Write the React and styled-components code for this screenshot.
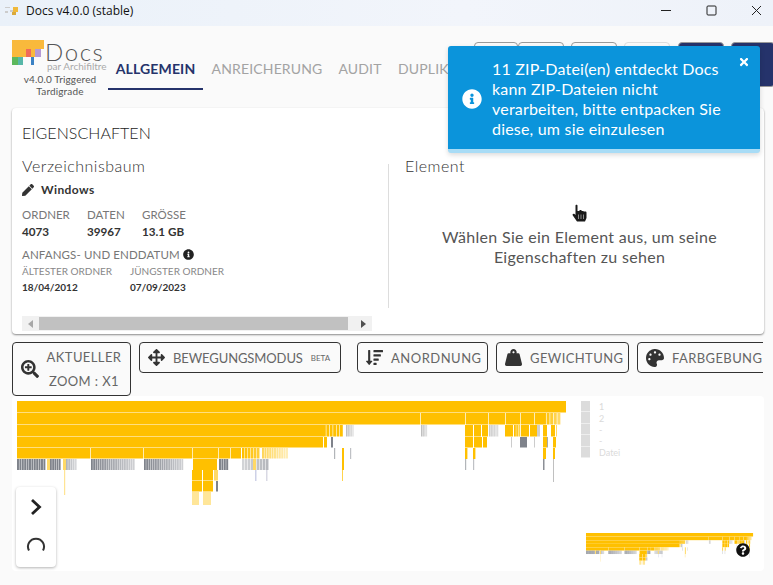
import React from "react";
import styled, { createGlobalStyle } from "styled-components";
import {
  FaArrowsAlt,
  FaInfoCircle,
  FaPalette,
  FaPen,
  FaQuestionCircle,
  FaSearchPlus,
  FaSortAmountDown,
  FaTimes,
  FaWeightHanging,
} from "react-icons/fa";

const NAVY = "#25336b";
const GOLD = "#ffc000";
const FONT = `Lato, "Noto Sans", sans-serif`;

const GlobalStyle = createGlobalStyle`
  html, body { margin: 0; padding: 0; background: #fafafa; }
  body { width: 773px; height: 585px; overflow: hidden; font-family: ${FONT}; color: #333; }
  * { box-sizing: border-box; }
`;

const Page = styled.div`
  position: relative;
  width: 773px;
  height: 585px;
  overflow: hidden;
  display: flex;
  flex-direction: column;
`;

const TitleBar = styled.div`
  height: 26px;
  flex: none;
  display: flex;
  align-items: center;
  padding: 0 0 5px 5px;
  background: linear-gradient(90deg, #eaf1f9, #f2f5fb 60%, #eef2f9);
`;

const TitleText = styled.span`
  margin-left: 7px;
  font: 12px "Open Sans", sans-serif;
  color: #111;
`;

const WindowControls = styled.div`
  margin-left: auto;
  margin-right: -6px;
  display: flex;
  align-items: center;
`;

const WindowButton = styled.div`
  width: 45px;
  height: 20px;
  display: flex;
  align-items: center;
  justify-content: center;
`;

const Header = styled.header`
  height: 82px;
  flex: none;
  display: flex;
  padding-left: 12px;
`;

const Brand = styled.div`
  width: 96px;
  flex: none;
  padding-top: 14px;
  display: flex;
  flex-direction: column;
`;

const BrandRow = styled.div`
  display: flex;
  height: 32px;
`;

const BrandName = styled.div`
  margin: 2px 0 0 1px;
  font-size: 24px;
  line-height: 20px;
  font-weight: 300;
  letter-spacing: 1.6px;
  color: #555;
`;

const BrandSub = styled.div`
  margin: 0 0 0 3px;
  font-size: 10px;
  line-height: 8px;
  white-space: nowrap;
  color: #aaa;
`;

const BrandVersion = styled.div`
  width: 96px;
  margin-top: 1px;
  text-align: center;
  font-size: 10px;
  line-height: 12px;
  letter-spacing: 0.15px;
  color: #555;
`;

const Tab = styled.div`
  height: 64px;
  width: ${({ $w }) => $w}px;
  flex: none;
  padding-top: 35px;
  text-align: ${({ $start }) => ($start ? "left" : "center")};
  padding-left: ${({ $start }) => ($start ? 9 : 0)}px;
  white-space: nowrap;
  font-size: 14px;
  letter-spacing: 0.15px;
  line-height: 16px;
  font-weight: ${({ $active }) => ($active ? 700 : 400)};
  color: ${({ $active }) => ($active ? NAVY : "#a3a3a3")};
  border-bottom: 2px solid ${({ $active }) => ($active ? NAVY : "transparent")};
`;

const TopActions = styled.div`
  position: absolute;
  top: 42px;
  left: 474px;
  display: flex;
`;

const TopAction = styled.div`
  width: ${({ $w }) => $w}px;
  height: 45px;
  margin-left: ${({ $gap }) => $gap || 0}px;
  flex: none;
  border-radius: 4px;
  border: 1px solid ${({ $pale }) => ($pale ? "#ddd" : "#999")};
  background: ${({ $filled }) => ($filled ? NAVY : "transparent")};
`;

const Card = styled.section`
  height: 226px;
  flex: none;
  margin: 0 9px 0 12px;
  background: #fff;
  border-radius: 4px;
  box-shadow: 0 1px 2px rgba(0, 0, 0, 0.45);
  padding: 15px 10px 0;
  display: flex;
  flex-direction: column;
`;

const CardTitle = styled.div`
  font-size: 16px;
  line-height: 20px;
  font-weight: 300;
  letter-spacing: 0.05px;
  color: #222;
`;

const Columns = styled.div`
  display: flex;
  margin-top: 13px;
  height: 152px;
`;

const LeftPane = styled.div`
  position: relative;
  width: 367px;
  flex: none;
  &::after {
    content: "";
    position: absolute;
    right: 0;
    top: 8px;
    bottom: 0;
    width: 1px;
    background: #ddd;
  }
`;

const RightPane = styled.div`
  flex: 1;
  padding-left: 16px;
  display: flex;
  flex-direction: column;
`;

const PaneTitle = styled.div`
  font-size: 16px;
  line-height: 20px;
  font-weight: 300;
  letter-spacing: 0.5px;
  color: #333;
`;

const NameRow = styled.div`
  margin-top: 6px;
  display: flex;
  align-items: center;
  gap: 7px;
  font-size: 12px;
  line-height: 16px;
  font-weight: 700;
  letter-spacing: 0.4px;
  color: #333;
`;

const Stats = styled.div`
  display: flex;
  margin-top: ${({ $top }) => $top}px;
`;

const Stat = styled.div`
  width: ${({ $w }) => $w}px;
  flex: none;
`;

const StatLabel = styled.div`
  font-size: 11.5px;
  line-height: 15px;
  color: #777;
  white-space: nowrap;
`;

const StatValue = styled.div`
  margin-top: 1px;
  font-size: 11.7px;
  line-height: 16px;
  font-weight: 700;
  color: #333;
`;

const DateHeading = styled.div`
  margin-top: 8px;
  display: flex;
  align-items: center;
  gap: 3px;
  font-size: 11.5px;
  line-height: 15px;
  letter-spacing: 0.12px;
  color: #777;
`;

const DateLabel = styled.div`
  font-size: 10px;
  line-height: 13px;
  margin-top: 3px;
  color: #888;
  white-space: nowrap;
`;

const DateValue = styled.div`
  margin-top: 2px;
  font-size: 10px;
  line-height: 14px;
  font-weight: 700;
  color: #333;
`;

const Placeholder = styled.div`
  margin-top: 51px;
  text-align: center;
  font-size: 16px;
  line-height: 20px;
  letter-spacing: 0.3px;
  color: #555;
`;

const ScrollTrack = styled.div`
  width: 350px;
  height: 15px;
  margin-top: 8px;
  background: #f1f1f1;
  display: flex;
  align-items: center;
`;

const ScrollThumb = styled.div`
  width: 309px;
  height: 13px;
  margin-right: auto;
  background: #c1c1c1;
`;

const ScrollArrow = styled.div`
  width: 17px;
  display: flex;
  justify-content: center;
  font-size: 0;
  &::before {
    content: "";
    border: 4px solid transparent;
    border-left: 0;
    border-right: 5px solid ${({ $off }) => ($off ? "#a8a8a8" : "#505050")};
    transform: ${({ $flip }) => ($flip ? "scaleX(-1)" : "none")};
  }
`;

const Toolbar = styled.div`
  height: 54px;
  flex: none;
  margin: 8px 10px 0 12px;
  display: flex;
  align-items: flex-start;
  overflow: hidden;
`;

const ToolButton = styled.div`
  height: ${({ $tall }) => ($tall ? 54 : 31)}px;
  width: ${({ $w }) => $w}px;
  margin-right: ${({ $gap }) => $gap}px;
  flex: none;
  display: flex;
  align-items: center;
  gap: ${({ $iconGap }) => $iconGap || 8}px;
  padding-left: ${({ $pad }) => $pad || 8}px;
  border: 1px solid #333;
  border-radius: 4px;
  font-size: 13px;
  letter-spacing: ${({ $track }) => $track ?? 0.4}px;
  color: #666;
  white-space: nowrap;
  svg { flex: none; color: #333; }
`;

const ZoomText = styled.div`
  width: 80px;
  text-align: center;
  line-height: 24px;
`;

const Beta = styled.span`
  font-size: 8px;
  letter-spacing: 0;
  color: #666;
`;

const VizPanel = styled.section`
  position: relative;
  height: 175px;
  flex: none;
  margin: 0 9px 0 12px;
  padding: 5px 0 0 5px;
  background: #fff;
  border-radius: 4px;
  display: flex;
  align-items: flex-start;
`;

const Legend = styled.div`
  margin-left: 12px;
  display: flex;
  flex-direction: column;
`;

const LegendRow = styled.div`
  height: 11.4px;
  display: flex;
  align-items: center;
  font-size: 9px;
  color: #dadada;
  white-space: nowrap;
`;

const LegendSwatch = styled.div`
  width: 9px;
  height: 100%;
  margin-right: 9px;
  background: #dcdcdc;
  border-bottom: 1px solid #eee;
`;

const ChartControls = styled.div`
  position: absolute;
  left: 4px;
  top: 91px;
  width: 40px;
  height: 80px;
  background: #fff;
  border-radius: 4px;
  box-shadow: 0 1px 3px rgba(0, 0, 0, 0.3);
  display: flex;
  flex-direction: column;
  align-items: center;
  padding-top: 11px;
  gap: 20px;
`;

const MiniMap = styled.div`
  position: absolute;
  left: 574px;
  top: 137px;
`;

const HelpIcon = styled.div`
  position: absolute;
  left: 724px;
  top: 147px;
  display: flex;
  color: #111;
`;

const Toast = styled.div`
  position: absolute;
  left: 448px;
  top: 46px;
  width: 312px;
  height: 107px;
  display: flex;
  align-items: center;
  padding: 3px 30px 0 14px;
  gap: 10px;
  background: #0b94db;
  border-bottom: 4px solid #a8dcf6;
  border-radius: 3px;
  color: #fff;
  font-size: 16px;
  line-height: 20px;
  letter-spacing: 0.2px;
  box-shadow: 0 2px 5px rgba(0, 0, 0, 0.15);
  svg { flex: none; }
`;

const ToastClose = styled.div`
  position: absolute;
  right: 10px;
  top: 10px;
  display: flex;
`;

const Pointer = styled.div`
  position: absolute;
  left: 572px;
  top: 204px;
  display: flex;
`;

// flame chart, in screen px so the same shapes can be scaled down for the minimap
const ROWS = [401, 413, 425, 437, 448, 459, 470, 481, 492];
const HEIGHTS = [11.5, 11.5, 11.5, 10.5, 10.5, 11, 10.5, 10.5, 13];

const bar = (row, x, x2, fill = GOLD, opacity = 1) => ({
  x,
  w: x2 - x,
  y: ROWS[row],
  h: HEIGHTS[row],
  fill,
  opacity,
});

const stripes = (row, x, x2, step, fill, from = 1, to = 1) => {
  const out = [];
  const n = Math.floor((x2 - x) / step);
  for (let i = 0; i < n; i++) {
    const at = x + i * step;
    out.push({
      x: at,
      w: step * 0.82,
      y: ROWS[row],
      h: HEIGHTS[row],
      fill,
      opacity: from + (to - from) * (i / n),
    });
  }
  return out;
};

const drop = (x, y, y2, fill, w = 1.2, opacity = 0.7) => ({
  x,
  w,
  y,
  h: y2 - y,
  fill,
  opacity,
});

const GREY = "#7f838b";
const PALE = "#ffd966";

const FLAME = [
  bar(0, 17, 566),
  bar(1, 17, 420),
  bar(1, 420.7, 465),
  bar(1, 465.7, 488),
  bar(1, 488.7, 505),
  bar(1, 505.7, 520),
  bar(1, 520.7, 534),
  bar(1, 534.7, 543),
  ...stripes(1, 543, 562, 3.6, GOLD, 1, 0.5),
  bar(2, 17, 323),
  ...stripes(2, 323, 346, 3.4, GOLD),
  ...stripes(2, 346, 354, 1.6, "#b8b8b8", 0.9, 0.3),
  ...stripes(2, 421, 428, 1.6, "#b8b8b8", 0.9, 0.3),
  bar(2, 465, 473),
  bar(2, 474, 481),
  bar(2, 482, 488),
  ...stripes(2, 489, 499, 1.6, "#c4c4c4", 0.9, 0.5),
  bar(2, 505, 513),
  ...stripes(2, 514, 521, 2.2, GOLD, 1, 0.6),
  bar(2, 521, 529),
  bar(2, 530, 537),
  bar(2, 537, 540, "#cfcfcf"),
  bar(2, 543, 547),
  bar(2, 551, 555),
  bar(2, 556, 557, PALE),
  bar(3, 17, 323),
  bar(3, 324, 327),
  bar(3, 331, 333, GREY),
  bar(3, 465, 473),
  bar(3, 474, 482),
  bar(3, 483, 487),
  bar(3, 511, 512, "#ccc"),
  bar(3, 520, 527, GREY),
  bar(3, 534, 535, "#ccc"),
  bar(3, 543, 547),
  bar(3, 547, 548, GREY, 0.7),
  bar(3, 553, 556),
  bar(4, 17, 90),
  bar(4, 90.7, 143),
  bar(4, 143.7, 192),
  bar(4, 192.7, 218),
  bar(4, 218.7, 230),
  bar(4, 230.7, 241),
  ...stripes(4, 242, 262, 3, GOLD, 1, 0.75),
  ...stripes(4, 262, 290, 2.4, GOLD, 0.65, 0.25),
  ...stripes(5, 17, 47, 2.4, GREY),
  bar(5, 47, 50, PALE),
  ...stripes(5, 50, 63, 2.2, GREY),
  bar(5, 63, 66, PALE),
  ...stripes(5, 66, 79, 2.2, GREY, 0.6, 0.25),
  ...stripes(5, 91, 135, 2.2, GREY, 1, 0.35),
  ...stripes(5, 144, 185, 2.2, GREY, 1, 0.35),
  bar(5, 193, 217),
  ...stripes(5, 219, 229, 2.4, GREY),
  ...stripes(5, 242, 270, 3, GREY, 0.35, 0.6),
  bar(5, 253, 256, PALE),
  bar(6, 192, 202),
  bar(6, 203, 213),
  bar(6, 214, 218, PALE),
  bar(7, 192, 202),
  bar(7, 203, 213),
  bar(7, 216, 218, GREY),
  bar(8, 192, 199, GOLD, 0.4),
  bar(8, 203, 211, GOLD, 0.4),
  drop(64, 470, 495, PALE),
  drop(255, 470, 481, "#b9bedd", 1.5),
  drop(266, 470, 481, "#c9c9d9", 1.5),
  drop(334, 448, 459, GREY, 1.2, 0.6),
  drop(342, 448, 470, GOLD, 2, 1),
  drop(342, 470, 481, GOLD, 1, 0.7),
  drop(350, 448, 459, GREY, 1.2, 0.5),
  drop(465, 448, 459, GOLD, 2.4, 1),
  drop(465, 459, 470, GREY, 1.2, 0.6),
  drop(473, 448, 459, GOLD, 2.4, 1),
  drop(473, 459, 470, GREY, 1.2, 0.5),
  drop(543, 448, 459, GOLD, 3, 1),
  drop(543, 459, 470, GREY, 1.5, 0.9),
  drop(553, 448, 459, GOLD, 2, 1),
  drop(553, 459, 482, "#b0b0b0", 1, 0.8),
];

const FlameChart = ({ width, height }) => (
  <svg width={width} height={height} viewBox="17 401 552 105" preserveAspectRatio="none">
    {FLAME.map((r, i) => (
      <rect key={i} x={r.x} y={r.y} width={r.w} height={r.h} fill={r.fill} opacity={r.opacity} />
    ))}
  </svg>
);

const AppIcon = () => (
  <svg width="14" height="12" viewBox="0 0 14 12">
    <rect x="0" y="2" width="5" height="1" fill="#ccc" />
    <rect x="0" y="6" width="3" height="2" fill="#ccc" />
    <rect x="5" y="5" width="4" height="2" fill="#ccc" />
    <rect x="8" y="2" width="5" height="5" fill="#f0b93a" />
    <rect x="7" y="7" width="4" height="3" fill="#d9a93c" />
  </svg>
);

const Logo = () => (
  <svg width="32" height="26" viewBox="0 0 32 26">
    <rect width="32" height="9" fill="#f9b93c" />
    <rect y="9" width="14" height="8" fill="#f9b93c" />
    <rect x="14" y="9" width="5" height="8" fill="#ef6a5a" />
    <rect x="19" y="9" width="4" height="8" fill="#f9b93c" />
    <rect x="23" y="9" width="6" height="8" fill="#b49ad6" />
    <rect y="17" width="6" height="8" fill="#5cb85c" />
    <rect x="6" y="17" width="5" height="8" fill="#57b7a8" />
    <rect x="19" y="17" width="3" height="8" fill="#3b82c4" />
  </svg>
);

const ChevronIcon = () => (
  <svg width="14" height="18" viewBox="0 0 14 18">
    <path d="M3 2l7.500 7L3 16" fill="none" stroke="#222" strokeWidth="2.8" />
  </svg>
);

const SpinnerIcon = () => (
  <svg width="20" height="18" viewBox="0 0 20 18">
    <path d="M3 14.500A8 8 0 1 1 17 14.500" fill="none" stroke="#333" strokeWidth="2" />
  </svg>
);

const PointerIcon = () => (
  <svg width="15" height="18" viewBox="0 0 15 18">
    <path
      d="M3.500 1.500C3.500.500 5.500.500 5.500 1.500V7h2V6h2v1h2V7.500h2c.7 0 1 .5 1 1.200V14l-1.500 3.500H5L.8 11.500c-.8-1.200.6-2.300 1.700-1.400l1 .9z"
      fill="#1a1a1a"
    />
    <path d="M6.500 10.500v4.500M9 10.500v4.500M11.500 10.500v4.500" stroke="#fff" strokeWidth="0.7" opacity="0.7" />
  </svg>
);

const tabs = [
  ["ALLGEMEIN", 95, true],
  ["ANREICHERUNG", 128],
  ["AUDIT", 58],
  ["DUPLIKATE", 80, false, true],
];

const legend = ["1", "2", "-", "-", "Datei"];

const App = () => (
  <Page>
    <GlobalStyle />
    <TitleBar>
      <AppIcon />
      <TitleText>Docs v4.0.0 (stable)</TitleText>
      <WindowControls>
        <WindowButton>
          <svg width="11" height="11" viewBox="0 0 11 11">
            <path d="M0 5.500h10" stroke="#222" />
          </svg>
        </WindowButton>
        <WindowButton>
          <svg width="11" height="11" viewBox="0 0 11 11">
            <rect x="1" y="1" width="9" height="9" rx="1" fill="none" stroke="#222" />
          </svg>
        </WindowButton>
        <WindowButton>
          <svg width="11" height="11" viewBox="0 0 11 11">
            <path d="M1 1l9 9M10 1l-9 9" stroke="#222" />
          </svg>
        </WindowButton>
      </WindowControls>
    </TitleBar>

    <Header>
      <Brand>
        <BrandRow>
          <Logo />
          <div>
            <BrandName>Docs</BrandName>
            <BrandSub>par Archifiltre</BrandSub>
          </div>
        </BrandRow>
        <BrandVersion>
          v4.0.0 Triggered
          <br />
          Tardigrade
        </BrandVersion>
      </Brand>
      {tabs.map(([label, w, active, start]) => (
        <Tab key={label} $w={w} $active={active} $start={start}>
          {label}
        </Tab>
      ))}
    </Header>

    <TopActions>
      <TopAction $w={44} />
      <TopAction $w={46} />
      <TopAction $w={46} $gap={7} />
      <TopAction $w={46} $gap={7} $pale />
      <TopAction $w={46} $gap={8} $filled />
      <TopAction $w={44} $gap={7} $filled />
    </TopActions>

    <Card>
      <CardTitle>EIGENSCHAFTEN</CardTitle>
      <Columns>
        <LeftPane>
          <PaneTitle>Verzeichnisbaum</PaneTitle>
          <NameRow>
            <FaPen size={12} />
            Windows
          </NameRow>
          <Stats $top={9}>
            <Stat $w={65}>
              <StatLabel>ORDNER</StatLabel>
              <StatValue>4073</StatValue>
            </Stat>
            <Stat $w={55}>
              <StatLabel>DATEN</StatLabel>
              <StatValue>39967</StatValue>
            </Stat>
            <Stat $w={60}>
              <StatLabel>GRÖSSE</StatLabel>
              <StatValue>13.1 GB</StatValue>
            </Stat>
          </Stats>
          <DateHeading>
            ANFANGS- UND ENDDATUM
            <FaInfoCircle size={11} color="#222" />
          </DateHeading>
          <Stats $top={0}>
            <Stat $w={108}>
              <DateLabel>ÄLTESTER ORDNER</DateLabel>
              <DateValue>18/04/2012</DateValue>
            </Stat>
            <Stat $w={110}>
              <DateLabel>JÜNGSTER ORDNER</DateLabel>
              <DateValue>07/09/2023</DateValue>
            </Stat>
          </Stats>
        </LeftPane>
        <RightPane>
          <PaneTitle>Element</PaneTitle>
          <Placeholder>
            Wählen Sie ein Element aus, um seine
            <br />
            Eigenschaften zu sehen
          </Placeholder>
        </RightPane>
      </Columns>
      <ScrollTrack>
        <ScrollArrow $off />
        <ScrollThumb />
        <ScrollArrow $flip />
      </ScrollTrack>
    </Card>

    <Toolbar>
      <ToolButton $tall $w={119} $gap={8} $iconGap={5}>
        <FaSearchPlus size={18} />
        <ZoomText>
          AKTUELLER
          <br />
          ZOOM : X1
        </ZoomText>
      </ToolButton>
      <ToolButton $w={202} $gap={16} $track={-0.1}>
        <FaArrowsAlt size={17} />
        BEWEGUNGSMODUS
        <Beta>BETA</Beta>
      </ToolButton>
      <ToolButton $w={131} $gap={8} $track={0.5}>
        <FaSortAmountDown size={17} />
        ANORDNUNG
      </ToolButton>
      <ToolButton $w={133} $gap={8}>
        <FaWeightHanging size={17} />
        GEWICHTUNG
      </ToolButton>
      <ToolButton $w={140} $gap={0}>
        <FaPalette size={18} />
        FARBGEBUNG
      </ToolButton>
    </Toolbar>

    <VizPanel>
      <FlameChart width={552} height={105} />
      <Legend>
        {legend.map((label, i) => (
          <LegendRow key={i}>
            <LegendSwatch />
            {label}
          </LegendRow>
        ))}
      </Legend>
      <ChartControls>
        <ChevronIcon />
        <SpinnerIcon />
      </ChartControls>
      <MiniMap>
        <FlameChart width={168} height={32} />
      </MiniMap>
      <HelpIcon>
        <FaQuestionCircle size={14} />
      </HelpIcon>
    </VizPanel>

    <Toast>
      <FaInfoCircle size={20} />
      <div>11 ZIP-Datei(en) entdeckt Docs kann ZIP-Dateien nicht verarbeiten, bitte entpacken Sie diese, um sie einzulesen</div>
      <ToastClose>
        <FaTimes size={12} />
      </ToastClose>
    </Toast>

    <Pointer>
      <PointerIcon />
    </Pointer>
  </Page>
);

export default App;
